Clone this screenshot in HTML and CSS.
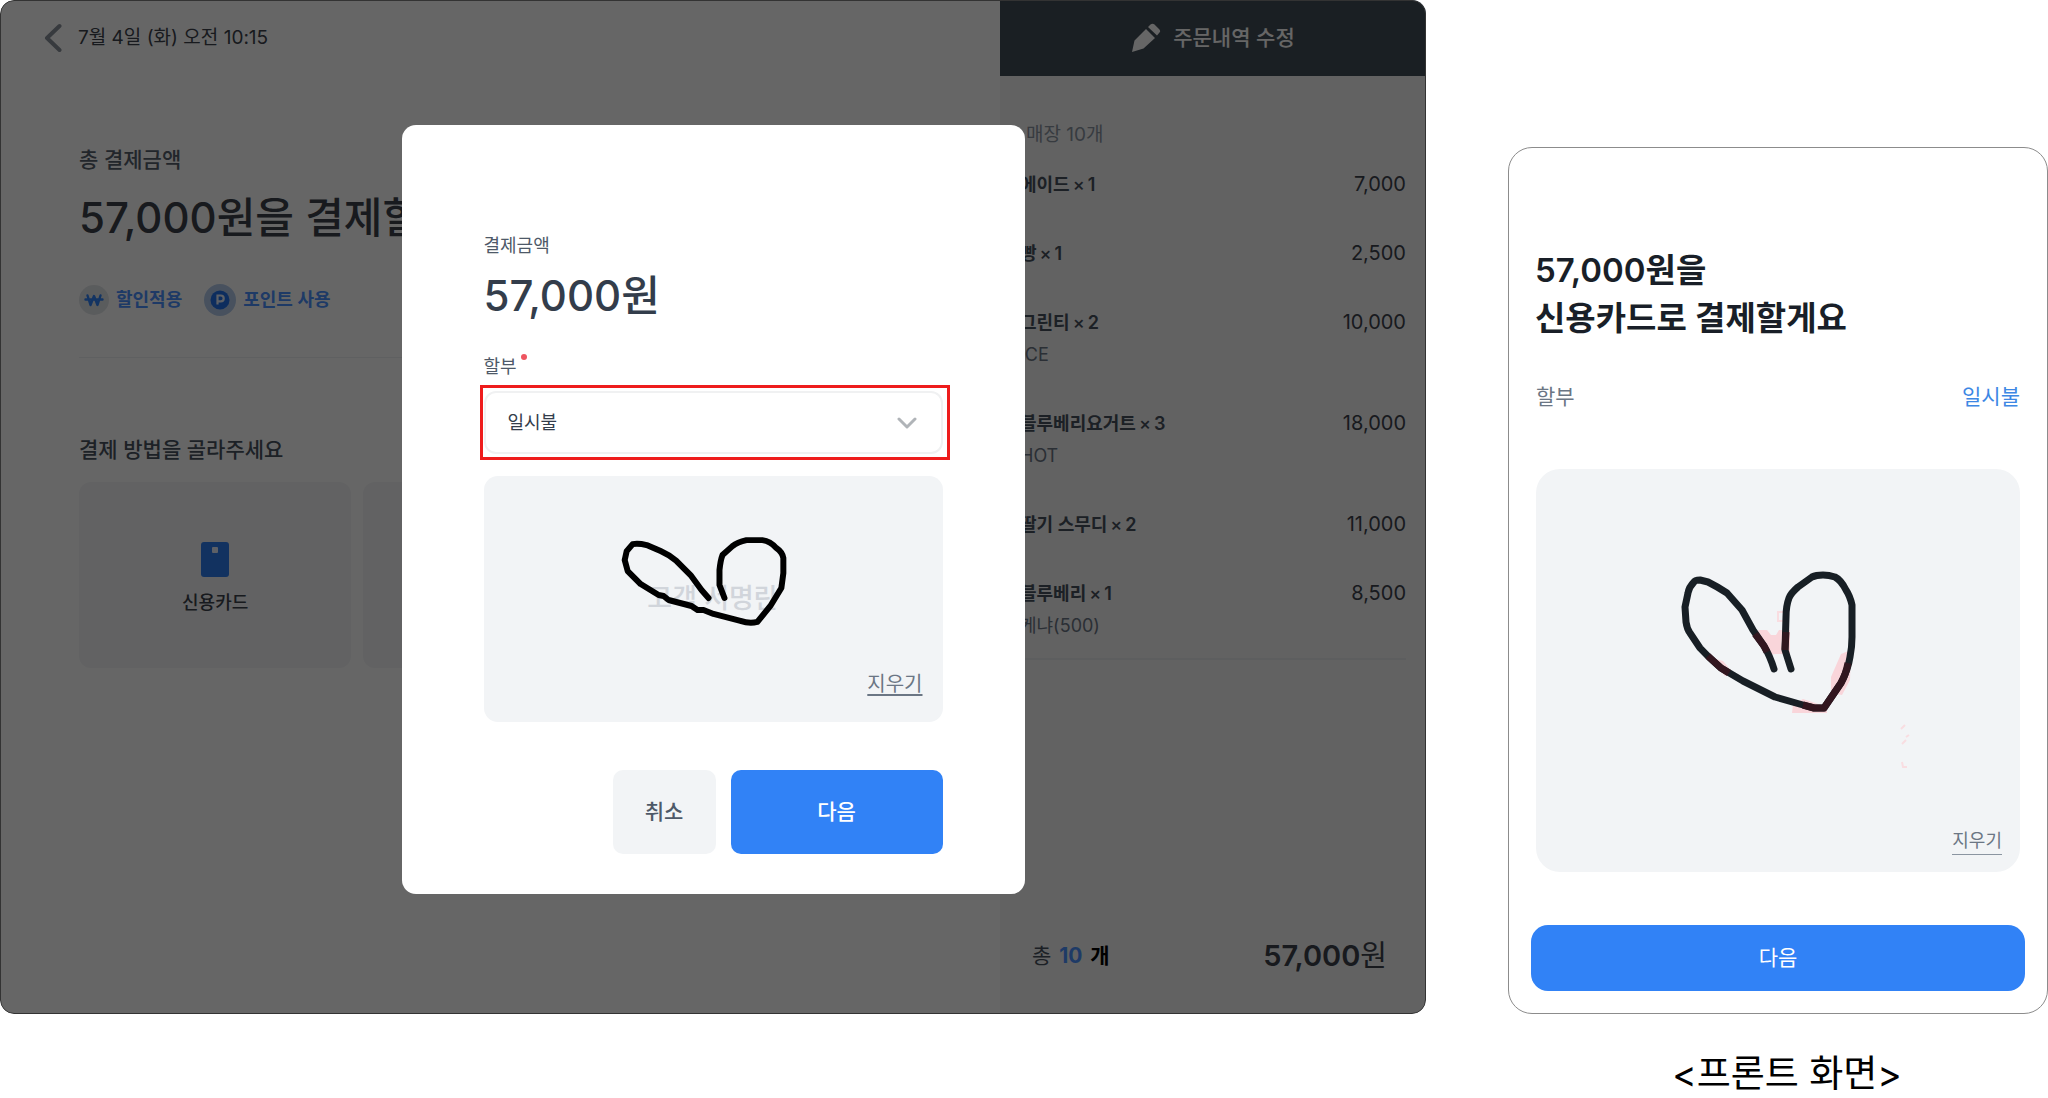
FILE: index.html
```html
<!DOCTYPE html>
<html lang="ko">
<head>
<meta charset="utf-8">
<title>신용카드 결제</title>
<link rel="stylesheet" href="styles.css">
</head>
<body>
<div class="stage">
  <section class="terminal">
    <main class="pay">
      <header class="pay-top">
        <button class="back" type="button" aria-label="뒤로">
          <svg width="18" height="30" viewBox="0 0 18 30"><path d="M15.500 3 3 15l12.500 12" fill="none" stroke="currentColor" stroke-width="4" stroke-linecap="round" stroke-linejoin="round"/></svg>
        </button>
        <time class="date">7월 4일 (화) 오전 10:15</time>
      </header>
      <p class="pay-label">총 결제금액</p>
      <h1 class="pay-title">57,000원을 결제할</h1>
      <div class="benefits">
        <button class="benefit" type="button">
          <svg width="30" height="30" viewBox="0 0 30 30"><circle cx="15" cy="15" r="15" fill="#e2e5e9"/><path d="M6.500 14.500h17M8.500 10.500l3 9.500 3.500-9 3.500 9 3-9.500" fill="none" stroke="#3182f6" stroke-width="2.400" stroke-linecap="round" stroke-linejoin="round"/></svg>
          <span>할인적용</span>
        </button>
        <button class="benefit" type="button">
          <svg width="32" height="32" viewBox="0 0 32 32"><circle cx="16" cy="16" r="16" fill="#b4cbec"/><circle cx="16" cy="16" r="9.500" fill="#2272eb"/><path d="M13.500 20.500v-9h3.300a2.900 2.900 0 0 1 0 5.800h-3.300" fill="none" stroke="#e8f1ff" stroke-width="2.200"/></svg>
          <span>포인트 사용</span>
        </button>
      </div>
      <h2 class="method-title">결제 방법을 골라주세요</h2>
      <div class="methods">
        <button class="method" type="button">
          <svg width="28" height="35" viewBox="0 0 28 35"><rect width="28" height="35" rx="3" fill="#2f7df0"/><rect x="11" y="5" width="6" height="6" rx="1" fill="#e8f1ff"/></svg>
          <span>신용카드</span>
        </button>
        <div class="method"></div>
        <div class="method"></div>
      </div>
    </main>

    <aside class="order">
      <button class="order-edit" type="button">
        <svg width="30" height="30" viewBox="0 0 30 30"><path d="M1 29 3.500 17.500 15 6l9 9-11.500 10.500zM17 4l2.500-2.500q2-1.500 4 0l4.500 4.500q2 2 .500 3.500L26 12.500z" fill="currentColor"/></svg>
        <span>주문내역 수정</span>
      </button>
      <div class="order-body">
        <p class="order-count">매장 10개</p>
        <ul class="items">
          <li class="item"><span class="name">에이드<i>×</i>1</span><span class="price">7,000</span></li>
          <li class="item"><span class="name">빵<i>×</i>1</span><span class="price">2,500</span></li>
          <li class="item"><span class="name">그린티<i>×</i>2</span><span class="price">10,000</span><span class="option">ICE</span></li>
          <li class="item"><span class="name">블루베리요거트<i>×</i>3</span><span class="price">18,000</span><span class="option">HOT</span></li>
          <li class="item"><span class="name">딸기 스무디<i>×</i>2</span><span class="price">11,000</span></li>
          <li class="item"><span class="name">블루베리<i>×</i>1</span><span class="price">8,500</span><span class="option">케냐(500)</span></li>
        </ul>
      </div>
      <footer class="order-total">
        <p class="qty">총 <b class="qty-num">10</b> <b class="qty-unit">개</b></p>
        <p class="sum"><b>57,000</b>원</p>
      </footer>
    </aside>

    <div class="overlay">
      <form class="modal">
        <p class="modal-label">결제금액</p>
        <p class="modal-amount">57,000원</p>
        <label class="modal-label required" for="plan">할부</label>
        <div class="select-box">
          <select id="plan" class="select"><option>일시불</option></select>
          <svg class="chevron" width="20" height="12" viewBox="0 0 20 12"><path d="m2 2 8 8 8-8" fill="none" stroke="currentColor" stroke-width="3" stroke-linecap="round" stroke-linejoin="round"/></svg>
        </div>
        <div class="sign sign-modal">
          <span class="sign-hint">고객 서명란</span>
          <svg class="ink" viewBox="0 0 460 246"><path d="M225 122 218 114 207 99 193 85Q186 79 177 75L163 69Q155 67 149 68L143 75 141 84 144 95 149 100 157 108 175 119 180 120 185 124 208 130 214 134 220 134 230 138 257 145Q266 148 274 146L287 130 298 112 300 97V82Q299 76 293 72 287 65 279 64H263Q254 66 249 70L239 79Q237 84 236 94V109L241 122" fill="none" stroke="#000" stroke-width="6" stroke-linecap="round" stroke-linejoin="round"/></svg>
          <button class="erase erase-modal" type="button">지우기</button>
        </div>
        <div class="actions">
          <button class="btn btn-cancel" type="button">취소</button>
          <button class="btn btn-next" type="button">다음</button>
        </div>
      </form>
    </div>
  </section>

  <section class="front">
    <h2 class="front-title">57,000원을<br>신용카드로 결제할게요</h2>
    <p class="front-plan"><span>할부</span><a class="plan-link" href="#plan">일시불</a></p>
    <div class="sign sign-front">
      <svg class="ink" viewBox="0 0 484 403">
        <path d="M222 161h9l4 5h5l3-5h11v24h-14l-9 1-5-10zM305 185l10-4-1 30-8 15-11-2v-16zM172 188l15 4 10 12-8 3zM257 236l10-6 24 8v6h-35z" fill="#f9d5da"/>
        <path d="M242 143h10v9h-10zM365 260l4-4M370 268l3-2M366 275l4-4M366 293l1 5h4" fill="none" stroke="#f9dde1" stroke-width="2"/>
        <path d="M238 200Q234 187 228 177L217 161 206 141 191 124Q182 118 172 113L164 111Q159 111 158 113 153 118 152 124L149 138 150 153Q151 160 154 164L164 179Q173 189 185 199L207 212 239 228 267 236 278 239H288L305 214Q312 201 314 188 316 178 316 168V136Q314 127 310 121 305 111 299 108 293 106 287 106 280 106 276 108L262 118Q255 124 253 129 250 137 250 148L249 181 255 200" fill="none" stroke="#181f25" stroke-width="7" stroke-linecap="round" stroke-linejoin="round"/>
        <path d="M219 165 228 177 231 183M250 163 249 181M172 187 185 199 193 204M267 236 278 239H288L305 214Q310 205 312 194" fill="none" stroke="#32161f" stroke-width="7" stroke-linejoin="round"/>
      </svg>
      <button class="erase erase-front" type="button">지우기</button>
    </div>
    <button class="btn btn-front" type="button">다음</button>
  </section>

  <p class="caption">&lt;프론트 화면&gt;</p>
</div>
</body>
</html>
```
FILE: styles.css
```css
* { box-sizing: border-box; }

body {
  margin: 0;
  background: #fff;
  color: #191f28;
  font-family: Inter, "Noto Sans CJK KR", sans-serif;
  font-size: 18px;
  line-height: 28px;
}

h1, h2, p, ul { margin: 0; padding: 0; }
ul { list-style: none; }
svg { display: block; flex: none; }

button {
  padding: 0;
  border: 0;
  background: none;
  color: inherit;
  font: inherit;
  cursor: pointer;
}

.stage {
  display: grid;
  grid-template-columns: minmax(0, 1426fr) minmax(0, 540fr);
  column-gap: 82px;
}

/* terminal */
.terminal {
  position: relative;
  display: grid;
  grid-template-columns: minmax(0, 1000fr) minmax(0, 426fr);
  overflow: hidden;
  border-radius: 14px;
  background: #fff;
  color: #3c434c;
}

.pay { padding: 23px 80px 0 79px; }

.pay-top {
  display: flex;
  align-items: center;
  gap: 16px;
  height: 30px;
  margin-left: -35px;
}
.back { color: #8b929b; }
.date { font-size: 19px; }

.pay-label,
.method-title {
  color: #56606c;
  font-size: 21px;
  font-weight: 500;
  line-height: 32px;
}
.pay-label { margin-top: 91px; }

.pay-title {
  margin-top: 14px;
  font-size: 42px;
  font-weight: 500;
  line-height: 56px;
  white-space: nowrap;
}

.benefits {
  display: flex;
  gap: 22px;
  margin-top: 38px;
  padding-bottom: 41px;
  border-bottom: 1px solid #eef0f2;
}
.benefit {
  display: flex;
  align-items: center;
  gap: 7px;
  height: 32px;
  color: #4b92ff;
  font-weight: 600;
}

.method-title { margin-top: 76px; color: #4a545f; }

.methods {
  display: grid;
  grid-template-columns: repeat(3, minmax(0, 1fr));
  gap: 12px;
  margin-top: 16px;
}
.method {
  display: flex;
  flex-direction: column;
  align-items: center;
  gap: 12px;
  height: 186px;
  padding-top: 60px;
  border-radius: 12px;
  background: #f5f6f7;
  font-weight: 500;
}

/* order column */
.order {
  display: flex;
  flex-direction: column;
  background: #f4f4f5;
}
.order-edit {
  display: flex;
  align-items: center;
  justify-content: center;
  gap: 12px;
  height: 76px;
  background: #434e58;
  color: #fff;
  font-size: 21px;
  font-weight: 500;
}
.order-body { padding: 45px 20px 0; }
.order-count { padding-left: 6px; color: #8b95a1; font-size: 19px; }

.items {
  display: grid;
  gap: 36px;
  margin-top: 19px;
  padding-bottom: 16px;
  border-bottom: 2px solid #e8eaed;
}
.item {
  display: grid;
  grid-template-columns: 1fr auto;
  line-height: 33px;
}
.name { color: #46505c; font-size: 18px; font-weight: 600; }
.name i { margin: 0 3px; font-style: normal; font-weight: 500; }
.price { font-size: 20px; }
.option { color: #6b7684; line-height: 32px; }

.order-total {
  display: flex;
  align-items: center;
  justify-content: space-between;
  margin-top: auto;
  padding: 0 39px 37px 32px;
}
.qty { color: #46505c; font-size: 21px; }
.qty-num { margin: 0 2px; color: #4b92ff; font-weight: 700; }
.qty-unit { color: #000; font-weight: 600; }
.sum { font-size: 29px; line-height: 42px; }
.sum b { font-weight: 600; }

/* payment dialog */
.overlay {
  position: absolute;
  inset: 0;
  display: grid;
  place-items: center;
  padding-top: 5px;
  border: 1px solid #333;
  border-radius: 14px;
  background: rgba(0, 0, 0, 0.6);
}
.modal {
  display: flex;
  flex-direction: column;
  width: 100%;
  max-width: 623px;
  padding: 107px 82px 40px;
  border-radius: 14px;
  background: #fff;
}
.modal-label { color: #4e5968; }
.modal-amount {
  margin: 8px 0 29px;
  color: #333d4b;
  font-size: 42px;
  font-weight: 500;
  line-height: 56px;
}
.required::after {
  content: "";
  display: inline-block;
  width: 6px;
  height: 6px;
  margin-left: 4px;
  border-radius: 50%;
  background: #ee5560;
  vertical-align: 13px;
}

.select-box {
  position: relative;
  margin-top: 10px;
}
.select-box::after {
  content: "";
  position: absolute;
  inset: -6px -7px -6px -4px;
  border: 3px solid #ee1c1c;
  pointer-events: none;
}
.select {
  display: block;
  width: 100%;
  height: 63px;
  padding: 0 22px;
  border: 2px solid #f0f1f2;
  border-radius: 12px;
  appearance: none;
  background: #fff;
  color: #333d4b;
  font: inherit;
}
.chevron {
  position: absolute;
  top: 26px;
  right: 26px;
  color: #b0b4b8;
  pointer-events: none;
}

.sign {
  position: relative;
  display: grid;
  place-items: center;
  background: #f2f4f6;
}
.sign-modal { height: 246px; margin-top: 22px; border-radius: 14px; }
.sign-hint { color: #d1d5db; font-size: 27px; font-weight: 500; }
.ink { position: absolute; inset: 0; width: 100%; height: 100%; }
.erase { position: absolute; color: #6b7684; }
.erase-modal {
  right: 20px;
  bottom: 24px;
  font-size: 20px;
  text-decoration: underline;
  text-underline-offset: 3px;
}

.actions {
  display: flex;
  justify-content: flex-end;
  gap: 15px;
  margin-top: 48px;
}
.btn {
  height: 84px;
  border-radius: 10px;
  background: #3182f6;
  color: #fff;
  font-size: 21px;
}
.btn-cancel { width: 103px; background: #f2f4f6; color: #4e5968; font-weight: 500; }
.btn-next { width: 212px; font-weight: 500; }

/* customer-facing screen */
.front {
  display: flex;
  flex-direction: column;
  margin-top: 147px;
  padding: 98px 22px 22px;
  border: 1px solid #8c8c8c;
  border-radius: 24px;
}
.front-title {
  padding: 0 4px;
  font-size: 33px;
  font-weight: 600;
  line-height: 48px;
}
.front-plan {
  display: flex;
  justify-content: space-between;
  margin-top: 39px;
  padding: 0 5px;
  color: #6b7684;
  font-size: 21px;
  line-height: 32px;
}
.plan-link { color: #3d87e4; text-decoration: none; }
.sign-front { height: 403px; margin: 56px 5px 0; border-radius: 24px; }
.erase-front {
  right: 18px;
  bottom: 17px;
  border-bottom: 1px solid #8b95a1;
  line-height: 26px;
}
.btn-front { height: 66px; margin-top: 53px; border-radius: 17px; }

.caption {
  grid-column: 2;
  padding: 36px 0 0 18px;
  color: #000;
  font-size: 37px;
  line-height: 48px;
  text-align: center;
}
```
